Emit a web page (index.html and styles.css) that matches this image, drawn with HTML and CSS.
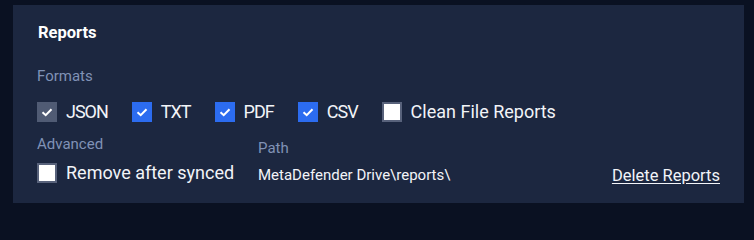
FILE: index.html
```html
<!DOCTYPE html>
<html lang="en">
<head>
<meta charset="utf-8">
<title>Reports</title>
<link rel="stylesheet" href="styles.css">
</head>
<body>
<section class="panel">
  <h2 class="title">Reports</h2>
  <div class="label">Formats</div>
  <div class="formats">
    <label class="check"><span class="box box-disabled"><svg viewBox="0 0 20 20" class="tick"><polyline points="5.5,10.2 8.7,13.2 14.5,7.2"/></svg></span><span class="check-text caps">JSON</span></label>
    <label class="check"><span class="box box-on"><svg viewBox="0 0 20 20" class="tick"><polyline points="5.5,10.2 8.7,13.2 14.5,7.2"/></svg></span><span class="check-text caps">TXT</span></label>
    <label class="check"><span class="box box-on"><svg viewBox="0 0 20 20" class="tick"><polyline points="5.5,10.2 8.7,13.2 14.5,7.2"/></svg></span><span class="check-text caps">PDF</span></label>
    <label class="check"><span class="box box-on"><svg viewBox="0 0 20 20" class="tick"><polyline points="5.5,10.2 8.7,13.2 14.5,7.2"/></svg></span><span class="check-text caps">CSV</span></label>
    <label class="check"><span class="box box-off"></span><span class="check-text">Clean File Reports</span></label>
  </div>
  <div class="advanced">
    <div class="col-adv">
      <div class="label">Advanced</div>
      <label class="check check-remove"><span class="box box-off"></span><span class="check-text">Remove after synced</span></label>
    </div>
    <div class="col-path">
      <div class="label">Path</div>
      <div class="path">MetaDefender Drive\reports\</div>
    </div>
    <a class="delete" href="#">Delete Reports</a>
  </div>
</section>
</body>
</html>
```

FILE: styles.css
```css
html, body {
  margin: 0;
  padding: 0;
}
html {
  height: 208px;
  overflow: hidden;
  background: #0a1122;
}
body {
  background: #0a1122;
  width: 754px;
  height: 208px;
  padding: 5px 10px 5px 13px;
  box-sizing: border-box;
  font-family: Roboto, "Noto Sans", sans-serif;
  color: #f2f4f8;
}
.panel {
  background: #1c2740;
  height: 198px;
  box-sizing: border-box;
  padding: 18px 24px 0 24px;
}
.title {
  margin: 0 0 0 1px;
  font-size: 16.5px;
  line-height: 20px;
  font-weight: 700;
  color: #ffffff;
}
.label {
  font-size: 15px;
  line-height: 20px;
  color: #8092b6;
}
.panel > .label {
  margin-top: 23px;
}
.formats {
  display: flex;
  align-items: center;
  gap: 24px;
  margin-top: 16px;
  height: 20px;
}
.check {
  display: flex;
  align-items: center;
  gap: 9px;
  cursor: pointer;
}
.check-text {
  font-size: 18px;
  line-height: 20px;
  color: #f2f4f8;
}
.caps {
  letter-spacing: -1px;
}
.box {
  width: 20px;
  height: 20px;
  box-sizing: border-box;
  flex: none;
  display: block;
}
.box-on {
  background: #2c6cf0;
}
.box-disabled {
  background: #505b74;
}
.box-off {
  background: #ffffff;
  border: 2px solid #58627b;
}
.tick {
  display: block;
  width: 20px;
  height: 20px;
  fill: none;
  stroke: #ffffff;
  stroke-width: 2;
}
.advanced {
  display: flex;
  margin-top: 12px;
}
.col-adv {
  width: 221px;
  flex: none;
}
.check-remove {
  margin-top: 9px;
}
.col-path {
  padding-top: 4px;
  flex: 1;
}
.path {
  margin-top: 7px;
  font-size: 15px;
  line-height: 20px;
  color: #f2f4f8;
}
.delete {
  align-self: flex-start;
  margin-top: 32px;
  font-size: 16.5px;
  line-height: 20px;
  color: #f2f4f8;
  text-decoration: underline;
  text-underline-offset: 2px;
}
```
